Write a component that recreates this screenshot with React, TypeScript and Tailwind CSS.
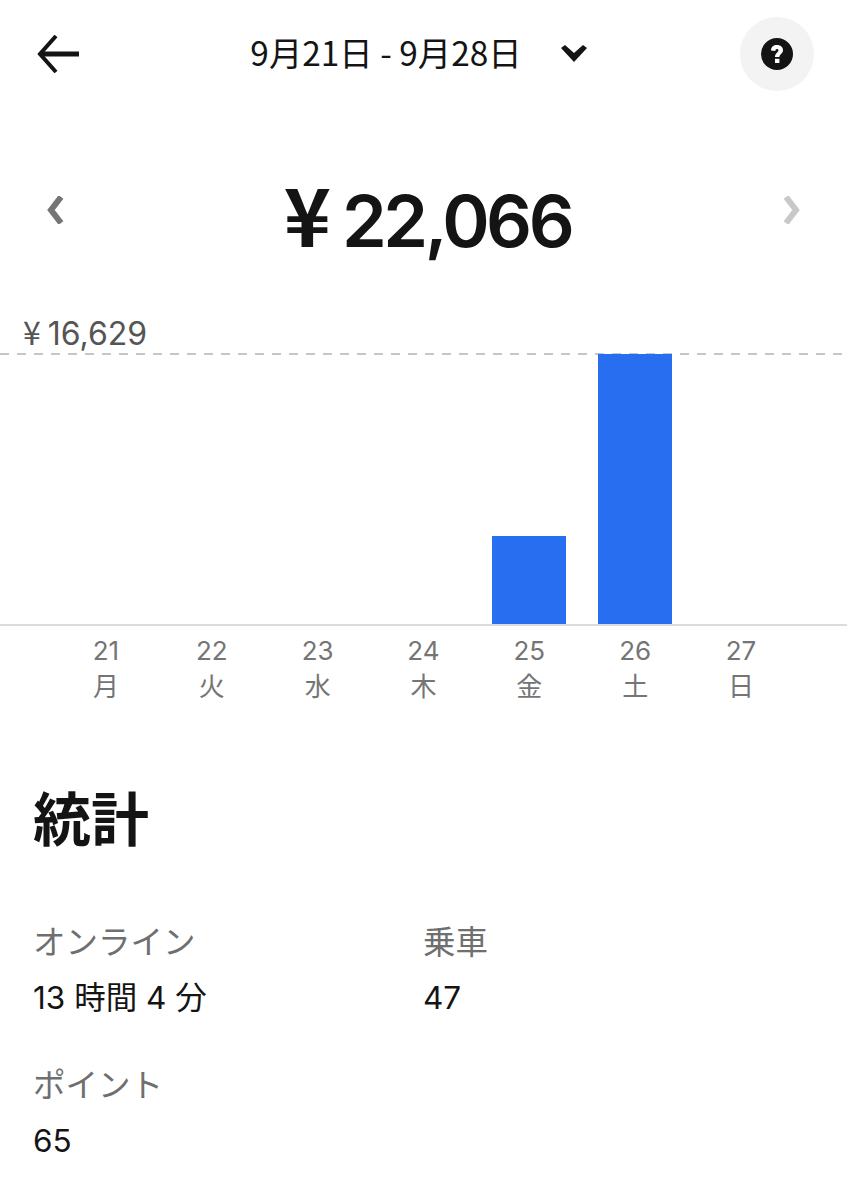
const days = [
  { date: '21', label: '月', height: 0 },
  { date: '22', label: '火', height: 0 },
  { date: '23', label: '水', height: 0 },
  { date: '24', label: '木', height: 0 },
  { date: '25', label: '金', height: 88 },
  { date: '26', label: '土', height: 270 },
  { date: '27', label: '日', height: 0 },
];

const font = "font-['Inter','Noto_Sans_CJK_JP',sans-serif]";
const cjk = "font-['Noto_Sans_CJK_JP',sans-serif]";

function Stat({ label, value, className }: { label: string; value: string; className?: string }) {
  return (
    <div className={className}>
      <div className="h-[40px] text-[32.5px] leading-[40px] text-[#6f6f6f]">{label}</div>
      <div className="mt-[15px] h-[40px] text-[31.5px] leading-[40px] text-[#141414]">{value}</div>
    </div>
  );
}

export default function App() {
  return (
    <div className={`h-[1200px] w-[847px] overflow-hidden bg-white text-[#141414] ${font}`}>
      {/* Header */}
      <header className="flex h-[108px] items-center justify-between pl-[37px] pr-[33px]">
        <svg viewBox="0 0 42 38" className="h-[38px] w-[42px]">
          <path d="M19 1 L3 19 L19 37" fill="none" stroke="#141414" strokeWidth="4" />
          <path d="M4 19 H42" fill="none" stroke="#141414" strokeWidth="5" />
        </svg>
        <div className="ml-[18px] flex items-center">
          <span className={`${cjk} pb-[4px] text-[33.4px] leading-[40px]`}>9月21日 - 9月28日</span>
          <svg viewBox="0 0 26 18" className="ml-[39px] h-[18px] w-[26px]">
            <path d="M0 3 L4 0 L13 8 L22 0 L26 3 L13 17 Z" fill="#141414" />
          </svg>
        </div>
        <div className="flex h-[74px] w-[74px] items-center justify-center rounded-full bg-[#f3f3f3]">
          <svg viewBox="0 0 32 32" className="h-[32px] w-[32px]">
            <circle cx="16" cy="16" r="16" fill="#141414" />
            <path d="M10 12.5 C10 8.8 12.6 7 16 7 C19.6 7 22 9.2 22 12.2 C22 15.6 18.6 16 18.4 19 H14 C14 14.8 17.4 14.4 17.4 12.4 C17.4 11.6 16.9 11.1 16 11.1 C15 11.1 14.4 11.8 14.4 13 Z" fill="#fff" />
            <rect x="14" y="20.8" width="4.4" height="4.2" fill="#fff" />
          </svg>
        </div>
      </header>

      {/* Amount */}
      <section className="mt-[64px] flex h-[96px] items-center justify-between px-[46px]">
        <svg viewBox="0 0 20 28" className="mb-[20px] h-[28px] w-[20px]">
          <path d="M15 1 L5 14 L15 27" fill="none" stroke="#757575" strokeWidth="6" />
        </svg>
        <div className="mb-[7px] ml-[8px] flex items-baseline text-[72px] font-semibold leading-[96px]">
          <span className={`${cjk} text-[80px]`}>¥</span>
          <span className="ml-[11px] tracking-[-3.5px]">22,066</span>
        </div>
        <svg viewBox="0 0 20 28" className="mb-[20px] h-[28px] w-[20px]">
          <path d="M5 1 L15 14 L5 27" fill="none" stroke="#c8c8c8" strokeWidth="6" />
        </svg>
      </section>

      {/* Chart */}
      <section className="mt-[45px]">
        <div className="flex h-[40px] items-baseline pl-[23px] text-[32px] leading-[36px] text-[#555555]">
          <span className={cjk}>¥</span>
          <span className="ml-[7px]">16,629</span>
        </div>
        <div className="h-[2px] bg-[repeating-linear-gradient(90deg,#c6c6c6_0,#c6c6c6_9px,transparent_9px,transparent_17px)]" />
        <div className="-mt-[1px] grid h-[270px] grid-cols-7 items-end px-[53px]">
          {days.map((d) => (
            <div key={d.date} className="flex justify-center">
              {d.height > 0 && <div className="w-[74px] bg-[#276ef1]" style={{ height: d.height }} />}
            </div>
          ))}
        </div>
        <div className="h-[2px] bg-[#dcdcdc]" />
        <div className="mt-[7px] grid grid-cols-7 px-[53px]">
          {days.map((d) => (
            <div key={d.date} className="text-center text-[26px] leading-[36px] text-[#757575]">
              <div>{d.date}</div>
              <div>{d.label}</div>
            </div>
          ))}
        </div>
      </section>

      {/* Stats */}
      <section className="mt-[75px] pl-[33px]">
        <h2 className="text-[58px] font-bold leading-[80px]">統計</h2>
        <div className="mt-[63px] flex">
          <Stat label="オンライン" value="13 時間 4 分" className="w-[390px]" />
          <Stat label="乗車" value="47" />
        </div>
        <Stat label="ポイント" value="65" className="mt-[48px]" />
      </section>
    </div>
  );
}
